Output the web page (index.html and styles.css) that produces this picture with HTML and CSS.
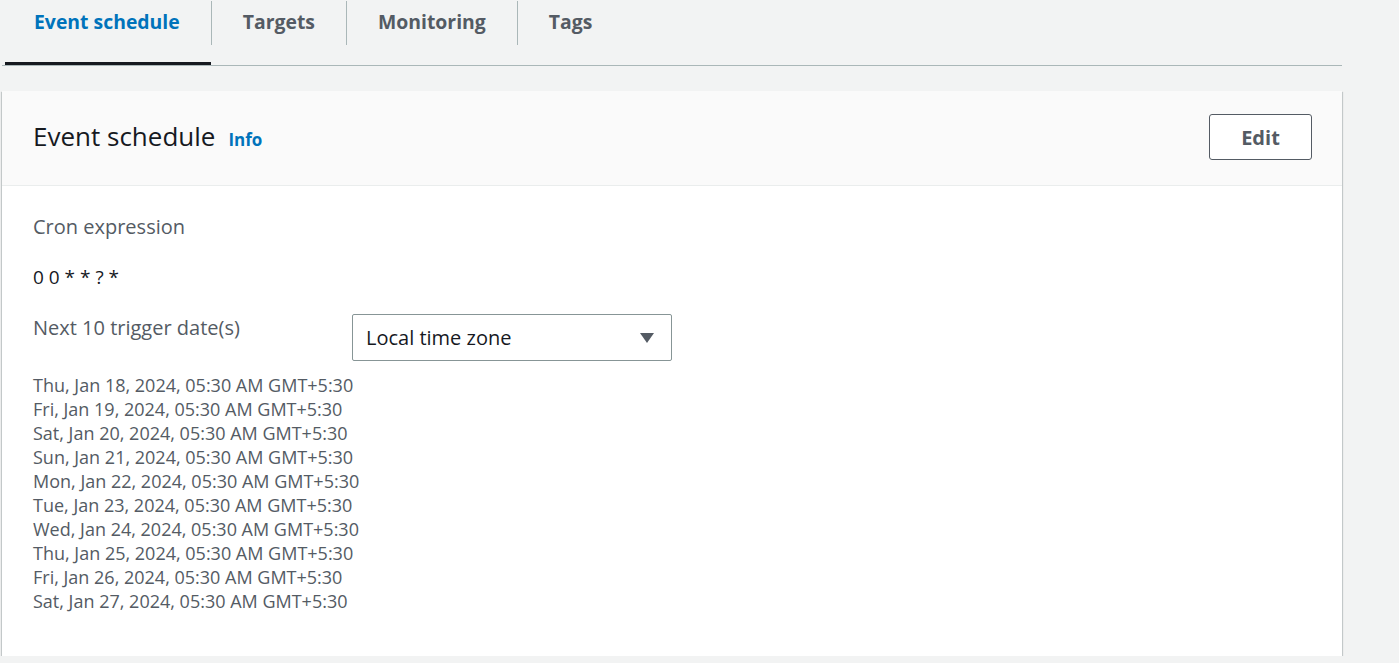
FILE: index.html
```html
<!DOCTYPE html>
<html lang="en">
<head>
<meta charset="utf-8">
<title>Event schedule</title>
<link rel="stylesheet" href="styles.css">
</head>
<body>
<div class="page">
  <nav class="tabs">
    <div class="tab tab-active">Event schedule</div>
    <div class="tab tab-sep">Targets</div>
    <div class="tab tab-sep">Monitoring</div>
    <div class="tab tab-sep">Tags</div>
  </nav>

  <section class="card">
    <header class="card-header">
      <div class="card-title">
        <h2 class="title">Event schedule</h2>
        <a class="info">Info</a>
      </div>
      <button class="btn">Edit</button>
    </header>
    <div class="card-body">
      <div class="label">Cron expression</div>
      <div class="value">0 0 * * ? *</div>
      <div class="trigger-row">
        <div class="label trigger-label">Next 10 trigger date(s)</div>
        <div class="select">
          <span>Local time zone</span>
          <svg class="caret" width="16" height="12" viewBox="0 0 16 12"><path d="M1 1h14L8 11z" fill="#545b64"/></svg>
        </div>
      </div>
      <ul class="dates">
        <li>Thu, Jan 18, 2024, 05:30 AM GMT+5:30</li>
        <li>Fri, Jan 19, 2024, 05:30 AM GMT+5:30</li>
        <li>Sat, Jan 20, 2024, 05:30 AM GMT+5:30</li>
        <li>Sun, Jan 21, 2024, 05:30 AM GMT+5:30</li>
        <li>Mon, Jan 22, 2024, 05:30 AM GMT+5:30</li>
        <li>Tue, Jan 23, 2024, 05:30 AM GMT+5:30</li>
        <li>Wed, Jan 24, 2024, 05:30 AM GMT+5:30</li>
        <li>Thu, Jan 25, 2024, 05:30 AM GMT+5:30</li>
        <li>Fri, Jan 26, 2024, 05:30 AM GMT+5:30</li>
        <li>Sat, Jan 27, 2024, 05:30 AM GMT+5:30</li>
      </ul>
    </div>
  </section>
</div>
</body>
</html>
```

FILE: styles.css
```css
html, body {
  margin: 0;
  padding: 0;
  background: #f2f3f3;
  font-family: "Open Sans", "Noto Sans", sans-serif;
  color: #16191f;
}

.page {
  width: 1340px;
  margin-left: 2px;
}

.tabs {
  display: flex;
  height: 65px;
  border-bottom: 1px solid #aab7b8;
  padding-left: 3px;
}

.tab {
  position: relative;
  padding: 7px 31px 0 32px;
  font-size: 19.4px;
  font-weight: 700;
  color: #545b64;
  line-height: 30px;
  height: 58px;
}

.tab-active {
  color: #0073bb;
  padding-left: 29px;
  padding-right: 31px;
  border-bottom: 3px solid #16191f;
  height: 55px;
}

.tab-sep::before {
  content: "";
  position: absolute;
  left: 0;
  top: 1px;
  height: 44px;
  border-left: 1px solid #aab7b8;
}

.card {
  margin-top: 25px;
  background: #fff;
  box-shadow: 0 1px 1px 0 rgba(0, 28, 36, 0.3), 1px 1px 1px 0 rgba(0, 28, 36, 0.15), -1px 1px 1px 0 rgba(0, 28, 36, 0.15);
  height: 565px;
}

.card-header {
  display: flex;
  align-items: center;
  justify-content: space-between;
  background: #fafafa;
  border-bottom: 1px solid #eaeded;
  padding: 23px 30px 25px 31px;
}

.card-title {
  display: flex;
  align-items: baseline;
  gap: 13px;
  margin-top: -3px;
}

.title {
  margin: 0;
  font-size: 26px;
  font-weight: 400;
  color: #16191f;
}

.info {
  font-size: 17px;
  font-weight: 700;
  color: #0073bb;
}

.btn {
  width: 103px;
  height: 46px;
  border: 1px solid #545b64;
  border-radius: 3px;
  background: #fff;
  font-family: inherit;
  font-size: 20px;
  font-weight: 700;
  color: #545b64;
  padding: 0;
}

.card-body {
  padding: 26px 31px 0 31px;
}

.label {
  font-size: 20px;
  color: #545b64;
  line-height: 30px;
}

.value {
  margin-top: 20px;
  font-size: 19px;
  line-height: 30px;
  color: #16191f;
}

.trigger-row {
  display: flex;
  align-items: flex-start;
  margin-top: 21px;
}

.trigger-label {
  width: 319px;
}

.select {
  display: flex;
  align-items: center;
  justify-content: space-between;
  width: 320px;
  height: 47px;
  box-sizing: border-box;
  border: 1px solid #879596;
  border-radius: 2px;
  background: #fff;
  padding: 0 16px 0 13px;
  font-size: 20px;
  color: #16191f;
  margin-top: 1px;
}

.dates {
  list-style: none;
  margin: 12px 0 0 0;
  padding: 0;
  font-size: 18px;
  line-height: 24px;
  color: #545b64;
}
```
